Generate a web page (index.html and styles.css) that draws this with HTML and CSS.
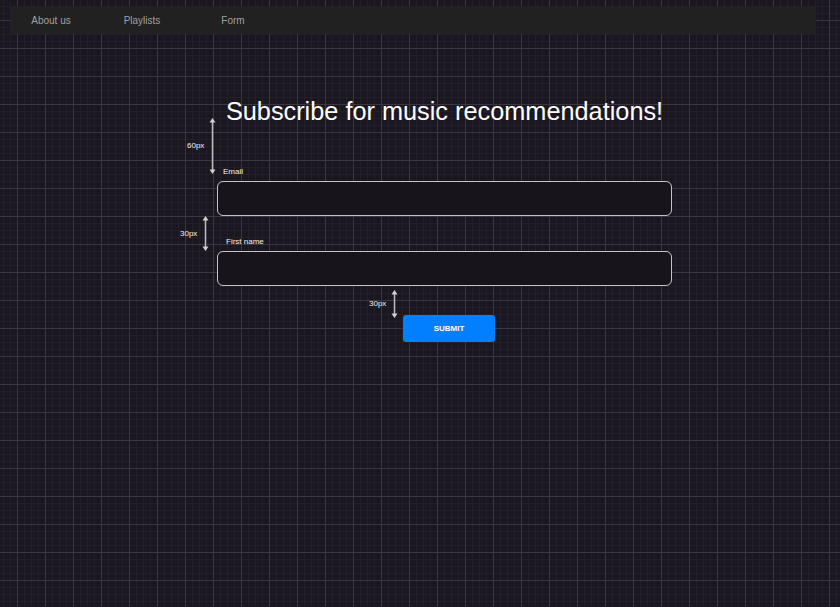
FILE: index.html
```html
<!DOCTYPE html>
<html lang="en">
<head>
<meta charset="utf-8">
<title>Subscribe</title>
<link rel="stylesheet" href="styles.css">
</head>
<body>
<nav class="nav">
  <a class="nav-link" href="#">About us</a>
  <a class="nav-link" href="#">Playlists</a>
  <a class="nav-link" href="#">Form</a>
</nav>

<main class="content">
  <h1 class="title">Subscribe for music recommendations!</h1>
  <form class="form">
    <div class="field field-email">
      <label class="label label-email" for="email">Email</label>
      <input class="input" id="email" type="email">
    </div>
    <div class="field field-name">
      <label class="label label-name" for="fname">First name</label>
      <input class="input" id="fname" type="text">
    </div>
    <button class="submit" type="button">SUBMIT</button>
  </form>
</main>

<div class="annot annot-1">
  <span class="annot-label">60px</span>
  <svg width="7" height="56" viewBox="0 0 7 56"><line x1="3.5" y1="3" x2="3.5" y2="53" stroke="#bdbdbd" stroke-width="1.5"/><polygon points="0.5,4.5 3.5,0 6.5,4.5" fill="#d0d0d0"/><polygon points="0.5,51.5 3.5,56 6.5,51.5" fill="#d0d0d0"/></svg>
</div>
<div class="annot annot-2">
  <span class="annot-label">30px</span>
  <svg width="7" height="35" viewBox="0 0 7 35"><line x1="3.5" y1="3" x2="3.5" y2="32" stroke="#bdbdbd" stroke-width="1.5"/><polygon points="0.5,4.5 3.5,0 6.5,4.5" fill="#d0d0d0"/><polygon points="0.5,30.5 3.5,35 6.5,30.5" fill="#d0d0d0"/></svg>
</div>
<div class="annot annot-3">
  <span class="annot-label">30px</span>
  <svg width="7" height="28" viewBox="0 0 7 28"><line x1="3.5" y1="3" x2="3.5" y2="25" stroke="#bdbdbd" stroke-width="1.5"/><polygon points="0.5,4.5 3.5,0 6.5,4.5" fill="#d0d0d0"/><polygon points="0.5,23.5 3.5,28 6.5,23.5" fill="#d0d0d0"/></svg>
</div>
</body>
</html>
```

FILE: styles.css
```css
html, body {
  margin: 0;
  padding: 0;
}

body {
  min-height: 607px;
  font-family: "Liberation Sans", Arial, sans-serif;
  background-color: #1a1720;
  background-image:
    linear-gradient(to right, #3a3740 1px, transparent 1px),
    linear-gradient(to bottom, #3a3740 1px, transparent 1px),
    linear-gradient(to right, #221f28 1px, transparent 1px),
    linear-gradient(to bottom, #221f28 1px, transparent 1px);
  background-size: 28px 28px, 28px 28px, 7px 7px, 7px 7px;
  background-position: 17px 20px, 17px 20px, 3px 6px, 3px 6px;
  overflow: hidden;
}

.nav {
  display: flex;
  gap: 11px;
  height: 28px;
  margin: 6px 24px 0 11px;
  background: #212121;
}

.nav-link {
  width: 80px;
  padding-top: 1px;
  text-align: center;
  font-size: 10px;
  line-height: 28px;
  color: #a0a0a0;
  text-decoration: none;
}

.content {
  width: 455px;
  margin: 0 0 0 217px;
}

.title {
  margin: 63px 0 0 0;
  font-size: 25.3px;
  line-height: 29px;
  font-weight: normal;
  color: #ffffff;
  text-align: center;
}

.form {
  display: flex;
  flex-direction: column;
  margin: 0;
}

.field {
  display: flex;
  flex-direction: column;
}

.field-email {
  margin-top: 41px;
}

.field-name {
  margin-top: 21px;
}

.label {
  font-size: 8px;
  line-height: 10px;
  color: #f2f2f2;
  margin-bottom: 4px;
}

.label-email {
  padding-left: 6px;
}

.label-name {
  padding-left: 9px;
}

.input {
  box-sizing: border-box;
  height: 35px;
  width: 455px;
  margin: 0;
  border: 1px solid #c4c4c8;
  border-radius: 6px;
  background: #17141c;
  color: #fff;
  outline: none;
}

.submit {
  align-self: flex-start;
  margin: 29px 0 0 186px;
  width: 92px;
  height: 27px;
  border: none;
  border-radius: 3px;
  background: #0080ff;
  color: #ffffff;
  font-family: "Liberation Sans", Arial, sans-serif;
  font-size: 8px;
  font-weight: bold;
  padding: 0;
}

.annot {
  position: absolute;
  display: flex;
  align-items: center;
  gap: 5px;
}

.annot svg {
  display: block;
}

.annot-label {
  font-size: 8px;
  line-height: 10px;
  color: #f0f0f0;
}

.annot-1 {
  left: 187px;
  top: 118px;
}

.annot-2 {
  left: 180px;
  top: 216px;
}

.annot-3 {
  left: 369px;
  top: 290px;
}
```
